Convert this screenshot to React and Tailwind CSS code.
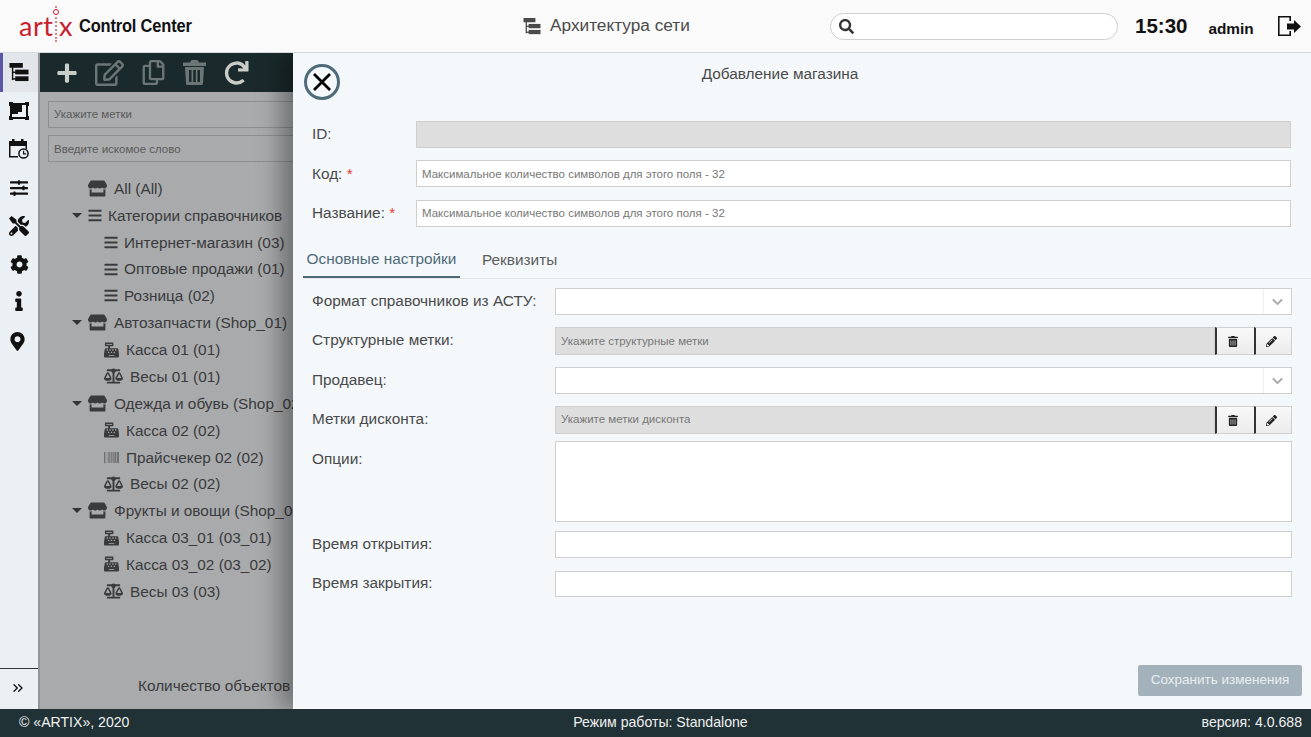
import { ChevronsRight } from "lucide-react";
import {
  FaBalanceScale,
  FaBarcode,
  FaBars,
  FaCashRegister,
  FaChevronDown,
  FaCog,
  FaInfo,
  FaMapMarkerAlt,
  FaPencilAlt,
  FaPlus,
  FaRedo,
  FaRegCopy,
  FaRegEdit,
  FaSearch,
  FaSlidersH,
  FaStore,
  FaTools,
  FaTrashAlt,
} from "react-icons/fa";

const SitemapIcon = ({ className }) => (
  <svg viewBox="0 0 20 20" className={className} fill="currentColor">
    <rect x="0" y="0" width="14" height="5" />
    <rect x="2.5" y="4" width="1.5" height="14" />
    <rect x="3" y="9" width="4" height="1.5" />
    <rect x="3" y="16" width="4" height="1.5" />
    <rect x="6" y="7" width="14" height="5" />
    <rect x="6" y="14" width="14" height="5" />
  </svg>
);

const GroupIcon = ({ className }) => (
  <svg viewBox="0 0 20 18" className={className} fill="currentColor">
    <path d="M0 0h4v1h12V0h4v4h-1v10h1v4h-4v-1H4v1H0v-4h1V4H0V0zm3 3v12h14V3H3z" />
    <rect x="3" y="3" width="10" height="7" />
    <rect x="3" y="10" width="6" height="2" />
  </svg>
);

const CalendarClockIcon = ({ className }) => (
  <svg viewBox="0 0 20 20" className={className} fill="currentColor">
    <rect x="3" y="0" width="2.5" height="4" />
    <rect x="12" y="0" width="2.5" height="4" />
    <rect x="0" y="2" width="18" height="5" />
    <path d="M0 7h1.5v10H9v1.5H0V7z" />
    <rect x="16.5" y="7" width="1.5" height="3" />
    <circle cx="14.5" cy="14.5" r="4.6" fill="#ebf0f4" stroke="currentColor" strokeWidth="1.5" />
    <path d="M14 11.8h1.2v2.4h2v1.200H14v-3.600z" />
  </svg>
);

const LogoutIcon = ({ className }) => (
  <svg viewBox="0 0 23 20" className={className} fill="currentColor">
    <path d="M0 0h13v5h-1.600V1.600H1.600v16.800h9.800V15H13v5H0V0z" />
    <path d="M9 7.500h7V4l7 6.500-7 6.500v-3.500H9v-6z" />
  </svg>
);

const ToolbarTrash = ({ className }) => (
  <svg viewBox="0 0 23 25" className={className} fill="currentColor">
    <path d="M7 2.500 8.500 0h6L16 2.500h7V6H0V2.500h7z" />
    <path d="M2 7h19l-1 16.500a1.500 1.500 0 0 1-1.500 1.500h-14.500A1.500 1.500 0 0 1 3 23.500L2 7zm4 3v12h2.500V10H6zm4.200 0v12h2.600V10h-2.600zm4.300 0v12H17V10h-2.500z" fillRule="evenodd" />
  </svg>
);

const railItems = [
  { icon: <SitemapIcon className="h-[19px] w-[20px]" />, active: true },
  { icon: <GroupIcon className="h-[18px] w-[20px]" /> },
  { icon: <CalendarClockIcon className="h-[20px] w-[20px]" /> },
  { icon: <FaSlidersH className="h-[18px] w-[20px]" /> },
  { icon: <FaTools className="h-[20px] w-[20px]" /> },
  { icon: <FaCog className="h-[19px] w-[19px]" /> },
  { icon: <FaInfo className="h-[20px] w-[20px] -translate-y-[2px]" /> },
  { icon: <FaMapMarkerAlt className="h-[19px] w-[19px] -translate-x-[2px]" /> },
];

const treeRows = [
  { label: "All (All)", type: "store", level: 0 },
  { label: "Категории справочников", type: "bars", level: 0, caret: true },
  { label: "Интернет-магазин (03)", type: "bars", level: 1 },
  { label: "Оптовые продажи (01)", type: "bars", level: 1 },
  { label: "Розница (02)", type: "bars", level: 1 },
  { label: "Автозапчасти (Shop_01)", type: "store", level: 0, caret: true },
  { label: "Касса 01 (01)", type: "cash", level: 1 },
  { label: "Весы 01 (01)", type: "scale", level: 1 },
  { label: "Одежда и обувь (Shop_02)", type: "store", level: 0, caret: true },
  { label: "Касса 02 (02)", type: "cash", level: 1 },
  { label: "Прайсчекер 02 (02)", type: "barcode", level: 1 },
  { label: "Весы 02 (02)", type: "scale", level: 1 },
  { label: "Фрукты и овощи (Shop_03)", type: "store", level: 0, caret: true },
  { label: "Касса 03_01 (03_01)", type: "cash", level: 1 },
  { label: "Касса 03_02 (03_02)", type: "cash", level: 1 },
  { label: "Весы 03 (03)", type: "scale", level: 1 },
];

const TreeIcon = ({ type }) => {
  if (type === "store") return <FaStore className="mr-[7px] h-[17px] w-[19px]" />;
  if (type === "bars") return <FaBars className="mr-[6px] h-[15px] w-[14px]" />;
  if (type === "cash") return <FaCashRegister className="mr-[7px] h-[16px] w-[15px]" />;
  if (type === "scale") return <FaBalanceScale className="mr-[7px] h-[16px] w-[19px]" />;
  return <FaBarcode className="mr-[7px] h-[15px] w-[15px] opacity-70" />;
};

const TreeRow = ({ row }) => (
  <div
    className={`flex h-[26.87px] items-center whitespace-nowrap text-[15.36px] text-[#3b3b3c] ${
      row.level === 1 ? "pl-[64px]" : "pl-[32px]"
    }`}
  >
    {row.level === 0 && (
      <span className="mr-[6px] w-[10px]">
        {row.caret && (
          <span className="block h-0 w-0 border-x-[5px] border-t-[5px] border-x-transparent border-t-[#333]" />
        )}
      </span>
    )}
    <TreeIcon type={row.type} />
    <span>{row.label}</span>
  </div>
);

const Row = ({ label, className = "", labelClass = "pt-[3px]", children }) => (
  <div className={`flex items-start ${className}`}>
    <label className={`w-[243px] shrink-0 text-[15.36px] leading-[20px] text-[#4a4a4a] ${labelClass}`}>
      {label}
    </label>
    {children}
  </div>
);

const inputClass =
  "h-[27px] w-full border border-[#cfcfcf] bg-white px-[5px] text-[11.5px] outline-none placeholder:text-[#777]";

const SelectBox = () => (
  <div className="flex h-[27px] flex-1 border border-[#cfcfcf] bg-white">
    <div className="flex-1" />
    <div className="flex w-[28px] items-center justify-center border-l border-[#f0f0f0] text-[#aaa]">
      <FaChevronDown className="h-[12px] w-[13px]" />
    </div>
  </div>
);

const TagsBox = ({ placeholder, inputExtra = "" }) => (
  <div className="flex h-[28px] flex-1">
    <input
      placeholder={placeholder}
      disabled
      className={`h-full flex-1 border border-[#cfcfcf] bg-[#dedede] px-[5px] text-[11.5px] outline-none placeholder:text-[#777] ${inputExtra}`}
    />
    <button className="flex w-[39px] items-center justify-center border-y border-y-[#d0d0d0] border-l-2 border-l-[#333] bg-gradient-to-b from-[#f8f8f8] to-[#ececec] pr-[5px] text-[#222]">
      <FaTrashAlt className="h-[11px] w-[10px]" />
    </button>
    <button className="flex w-[38px] items-center justify-center border-y border-r border-y-[#d0d0d0] border-r-[#d0d0d0] border-l-2 border-l-[#333] bg-gradient-to-b from-[#f8f8f8] to-[#ececec] pr-[4px] text-[#222]">
      <FaPencilAlt className="h-[11px] w-[11px]" />
    </button>
  </div>
);

const StorePanel = () => (
  <div className="absolute inset-y-0 right-0 flex w-[1018px] flex-col bg-[#f4f8fb] shadow-[-12px_0_22px_rgba(0,0,0,0.35)]">
    <div className="relative h-[68px]">
      <button className="absolute left-[11px] top-[11px] flex h-[36px] w-[36px] items-center justify-center rounded-full border-[3px] border-[#4f6a78] text-black">
        <svg viewBox="0 0 20 20" className="h-[20px] w-[20px]" stroke="currentColor" strokeWidth="2.8">
          <path d="M2 2l16 16M18 2L2 18" />
        </svg>
      </button>
      <div className="pr-[44px] pt-[12px] text-center text-[15.36px] leading-[18px] text-[#4a4a4a]">
        Добавление магазина
      </div>
    </div>
    <div className="flex flex-col pl-[19px] pr-[20px]">
      <div className="flex items-center">
        <label className="w-[104px] shrink-0 pb-[2px] text-[15.36px] text-[#4a4a4a]">ID:</label>
        <input disabled className="h-[27px] flex-1 border border-[#cfcfcf] bg-[#dedede]" />
      </div>
      <div className="mt-[12px] flex items-center">
        <label className="w-[104px] shrink-0 text-[15.36px] text-[#4a4a4a]">
          Код: <span className="text-[#e53935]">*</span>
        </label>
        <input
          placeholder="Максимальное количество символов для этого поля - 32"
          className={inputClass}
        />
      </div>
      <div className="mt-[13px] flex items-center">
        <label className="w-[104px] shrink-0 pb-[2px] text-[15.36px] text-[#4a4a4a]">
          Название: <span className="text-[#e53935]">*</span>
        </label>
        <input
          placeholder="Максимальное количество символов для этого поля - 32"
          className={`${inputClass} pb-[2px]`}
        />
      </div>
    </div>
    <div className="ml-[10px] mt-[18px] flex h-[34px] border-b border-[#e3e6e8] text-[15.36px]">
      <div className="flex w-[157px] items-center justify-center border-b-2 border-[#4f6a78] pb-[4px] text-[#4f6a78]">
        Основные настройки
      </div>
      <div className="flex items-center pb-[4px] pl-[22px] text-[#5c5c5c]">Реквизиты</div>
    </div>
    <div className="mt-[9px] flex flex-col pl-[19px] pr-[19px]">
      <Row label="Формат справочников из АСТУ:">
        <SelectBox />
      </Row>
      <Row label="Структурные метки:" className="mt-[12px]">
        <TagsBox placeholder="Укажите структурные метки" />
      </Row>
      <Row label="Продавец:" className="mt-[12px]">
        <SelectBox />
      </Row>
      <Row label="Метки дисконта:" className="mt-[12px]">
        <TagsBox placeholder="Укажите метки дисконта" inputExtra="pb-[2px]" />
      </Row>
      <Row label="Опции:" className="mt-[7px]" labelClass="pt-[8px]">
        <textarea className="h-[81px] flex-1 resize-none border border-[#cfcfcf] bg-white outline-none" />
      </Row>
      <Row label="Время открытия:" className="mt-[9px]">
        <input className="h-[27px] flex-1 border border-[#cfcfcf] bg-white" />
      </Row>
      <Row label="Время закрытия:" className="mt-[13px]" labelClass="pt-[2px]">
        <input className="h-[26px] flex-1 border border-[#cfcfcf] bg-white" />
      </Row>
    </div>
    <div className="mt-auto flex justify-end pb-[13px] pr-[9px]">
      <button className="h-[31px] w-[164px] rounded-[2px] bg-[#a3b1bb] text-[13.5px] text-[#e8edf0]">
        Сохранить изменения
      </button>
    </div>
  </div>
);

export default function App() {
  return (
    <div className="flex h-[737px] w-[1311px] flex-col overflow-hidden bg-[#f4f8fb] font-['Liberation_Sans',Arial,sans-serif]">
      <header className="flex h-[53px] shrink-0 items-center border-b border-[#d6dadd] bg-[#fafafa]">
        <div className="flex w-[504px] items-center pl-[19px]">
          <span className="relative flex w-[54px] justify-between font-['Lato',sans-serif] text-[27px] leading-none tracking-[0.5px] text-[#c8202f] -translate-y-[1px]">
            <span>art</span>
            <span>x</span>
            <span className="absolute left-[36px] top-[-6px] h-[36px] border-l-2 border-dotted border-[#e2808a]" />
            <span className="absolute left-[34px] top-[-3px] h-[6px] w-[6px] rounded-full border border-[#c8202f] bg-[#fafafa]" />
          </span>
          <span className="ml-[6px] origin-left scale-x-[0.865] whitespace-nowrap text-[19px] font-bold tracking-[-0.2px] text-[#111]">
            Control Center
          </span>
        </div>
        <div className="flex w-[307px] items-center pl-[19px] text-[17.25px] text-[#4a4a4a]">
          <SitemapIcon className="mr-[9px] h-[17px] w-[18px] text-[#4a4a4a]" />
          Архитектура сети
        </div>
        <div className="ml-[19px] flex h-[27px] w-[288px] items-center rounded-full border border-[#cfcfcf] bg-white pl-[8px]">
          <FaSearch className="h-[15px] w-[15px] text-[#333]" />
        </div>
        <span className="ml-[17px] text-[20.5px] font-bold text-[#111]">15:30</span>
        <span className="ml-[21px] mt-[5px] text-[15.36px] font-bold text-[#111]">admin</span>
        <LogoutIcon className="ml-[24px] h-[20px] w-[23px] text-[#111]" />
      </header>

      <div className="flex min-h-0 flex-1">
        <aside className="flex w-[38px] shrink-0 flex-col bg-[#ebf0f4] text-[#111]">
          {railItems.map((item, i) => (
            <div
              key={i}
              className={`flex h-[38.5px] items-center justify-center ${
                item.active ? "border-l-[3px] border-[#5a55a5] bg-[#e2e6ea] pr-[3px]" : ""
              }`}
            >
              {item.icon}
            </div>
          ))}
          <div className="mt-auto flex h-[41px] items-center justify-center border-t border-[#333] pb-[3px] pr-[3px]">
            <ChevronsRight className="h-[16px] w-[16px]" strokeWidth={2} />
          </div>
        </aside>

        <main className="relative min-w-0 flex-1 overflow-hidden border-l-2 border-[#949698] bg-[#a8aaac]">
          <div className="flex h-[39px] items-center gap-[14px] bg-[#1a2a2c] pl-[15px]">
            <FaPlus className="h-[22px] w-[24px] text-[#c9cdc8]" />
            <FaRegEdit className="ml-[2px] h-[26px] w-[29px] text-[#6d7676]" />
            <FaRegCopy className="ml-[4px] h-[25px] w-[23px] text-[#6d7676]" />
            <ToolbarTrash className="ml-[4px] h-[25px] w-[23px] text-[#6d7676]" />
            <FaRedo className="ml-[4px] h-[24px] w-[25px] text-[#c9cdc8]" />
          </div>
          <div className="flex w-[260px] flex-col gap-[7px] pl-[8px] pt-[9px]">
            <input
              placeholder="Укажите метки"
              className="h-[27px] w-full border border-[#8e8f91] bg-[#a9abad] px-[5px] pb-[2px] text-[11.5px] outline-none placeholder:text-[#5a5a5a]"
            />
            <input
              placeholder="Введите искомое слово"
              className="h-[27px] w-full border border-[#8e8f91] bg-[#a9abad] px-[5px] text-[11.5px] outline-none placeholder:text-[#5a5a5a]"
            />
          </div>
          <div className="mt-[13px]">
            {treeRows.map((row) => (
              <TreeRow key={row.label} row={row} />
            ))}
          </div>
          <div className="absolute bottom-[12px] left-[98px] whitespace-nowrap text-[15.36px] text-[#3b3b3c]">
            Количество объектов
          </div>
          <StorePanel />
        </main>
      </div>

      <footer className="grid h-[28px] shrink-0 grid-cols-3 items-center bg-[#203236] pl-[19px] pr-[9px] text-[14.1px] text-[#f0f0f0]">
        <span>© «ARTIX», 2020</span>
        <span className="text-center">Режим работы: Standalone</span>
        <span className="text-right">версия: 4.0.688</span>
      </footer>
    </div>
  );
}
